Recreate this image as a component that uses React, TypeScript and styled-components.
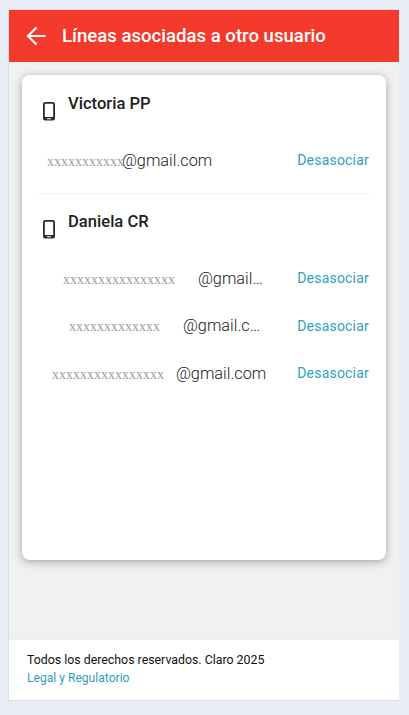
import React from 'react'
import styled, { createGlobalStyle } from 'styled-components'

const GlobalStyle = createGlobalStyle`
  html, body {
    margin: 0;
    padding: 0;
    background: #e9eef6;
    font-family: Roboto, "Liberation Sans", sans-serif;
  }
`

const Page = styled.div`
  height: 715px;
  box-sizing: border-box;
  padding: 9px 10px 14px 8px;
`

const Frame = styled.div`
  height: 692px;
  box-sizing: border-box;
  display: flex;
  flex-direction: column;
  background: #f1f1f1;
  border: 1px solid #dcdfe4;
  border-right: none;
`

const Header = styled.header`
  height: 52px;
  flex: none;
  display: flex;
  align-items: center;
  gap: 16px;
  padding-left: 17px;
  background: #f33a2c;
`

const BackButton = styled.svg`
  width: 20px;
  height: 20px;
  flex: none;
`

const Title = styled.h1`
  margin: 0;
  font-size: 18.6px;
  font-weight: 500;
  color: #fff;
`

const Main = styled.main`
  flex: 1;
  padding: 13px 13px 79px 13px;
  display: flex;
`

const Card = styled.section`
  flex: 1;
  box-sizing: border-box;
  background: #fff;
  border-radius: 8px;
  box-shadow: 0 2px 8px rgba(0, 0, 0, 0.32);
  padding: 19px 17px 0 17px;
`

const Group = styled.div`
  & + & {
    margin-top: 23px;
    padding-top: 18px;
    border-top: 1px solid #eeeeee;
  }
`

const Owner = styled.div`
  display: flex;
  align-items: flex-start;
  gap: 10px;
  padding-left: 1px;
`

const PhoneIcon = styled.svg`
  width: 18px;
  height: 24px;
  margin-top: 5px;
  flex: none;
`

const OwnerName = styled.div`
  font-size: 16.6px;
  font-weight: 500;
  line-height: 20px;
  color: #212121;
`

const Lines = styled.div<{ $top: number }>`
  margin-top: ${p => p.$top}px;
  display: flex;
  flex-direction: column;
  gap: 27.5px;
`

const Line = styled.div`
  display: flex;
  align-items: center;
  height: 20px;
`

const Email = styled.div<{ $left: number; $gap: number }>`
  display: flex;
  align-items: baseline;
  gap: ${p => p.$gap}px;
  padding-left: ${p => p.$left}px;
  flex: none;
`

const Mask = styled.span`
  font-family: "Liberation Serif", serif;
  font-size: 14px;
  color: #a0a0a0;
  flex: none;
`

const Domain = styled.span<{ $pull?: number }>`
  margin-left: ${p => p.$pull || 0}px;
  font-size: 16.3px;
  font-weight: 300;
  color: #222;
  white-space: nowrap;
`

const Unlink = styled.a`
  margin-left: auto;
  font-size: 14px;
  letter-spacing: 0.2px;
  color: #2f9fbf;
`

const Footer = styled.footer`
  height: 61px;
  flex: none;
  box-sizing: border-box;
  background: #fff;
  border-top: 1px solid #ececec;
  padding: 11px 17px 0 18px;
  line-height: 18px;
`

const Rights = styled.div`
  font-size: 12.35px;
  color: #111;
`

const LegalLink = styled.a`
  display: block;
  font-size: 12.1px;
  color: #2f9fbf;
`

const Phone = () => (
  <PhoneIcon viewBox="0 0 18 24">
    <path
      fill="#2b2b2b"
      fillRule="evenodd"
      d="M5.2 3h7.600A2.200 2.200 0 0 1 15 5.200v14.100a2.200 2.200 0 0 1-2.200 2.200H5.200A2.200 2.200 0 0 1 3 19.300V5.200A2.200 2.200 0 0 1 5.200 3zM4.800 5.200v12.800h8.400V5.200a.5.500 0 0 0-.5-.5H5.300a.5.500 0 0 0-.5.500zM7 19.200v1h4v-1z"
    />
  </PhoneIcon>
)

const App = () => {
  return (
    <>
      <GlobalStyle />
      <Page>
        <Frame>
          <Header>
            <BackButton viewBox="0 0 20 20">
              <path d="M19.500 10H2M10.500 1.500 2 10l8.500 8.500" fill="none" stroke="#fff" strokeWidth="2.200" />
            </BackButton>
            <Title>Líneas asociadas a otro usuario</Title>
          </Header>
          <Main>
            <Card>
              <Group>
                <Owner>
                  <Phone />
                  <OwnerName>Victoria PP</OwnerName>
                </Owner>
                <Lines $top={27}>
                  <Line>
                    <Email $left={8} $gap={0}>
                      <Mask>xxxxxxxxxxx</Mask>
                      <Domain $pull={-2}>@gmail.com</Domain>
                    </Email>
                    <Unlink>Desasociar</Unlink>
                  </Line>
                </Lines>
              </Group>
              <Group>
                <Owner>
                  <Phone />
                  <OwnerName>Daniela CR</OwnerName>
                </Owner>
                <Lines $top={27}>
                  <Line>
                    <Email $left={24} $gap={23}>
                      <Mask>xxxxxxxxxxxxxxxx</Mask>
                      <Domain>@gmail…</Domain>
                    </Email>
                    <Unlink>Desasociar</Unlink>
                  </Line>
                  <Line>
                    <Email $left={30} $gap={23}>
                      <Mask>xxxxxxxxxxxxx</Mask>
                      <Domain>@gmail.c…</Domain>
                    </Email>
                    <Unlink>Desasociar</Unlink>
                  </Line>
                  <Line>
                    <Email $left={13} $gap={12}>
                      <Mask>xxxxxxxxxxxxxxxx</Mask>
                      <Domain>@gmail.com</Domain>
                    </Email>
                    <Unlink>Desasociar</Unlink>
                  </Line>
                </Lines>
              </Group>
            </Card>
          </Main>
          <Footer>
            <Rights>Todos los derechos reservados. Claro 2025</Rights>
            <LegalLink>Legal y Regulatorio</LegalLink>
          </Footer>
        </Frame>
      </Page>
    </>
  )
}

export default App
